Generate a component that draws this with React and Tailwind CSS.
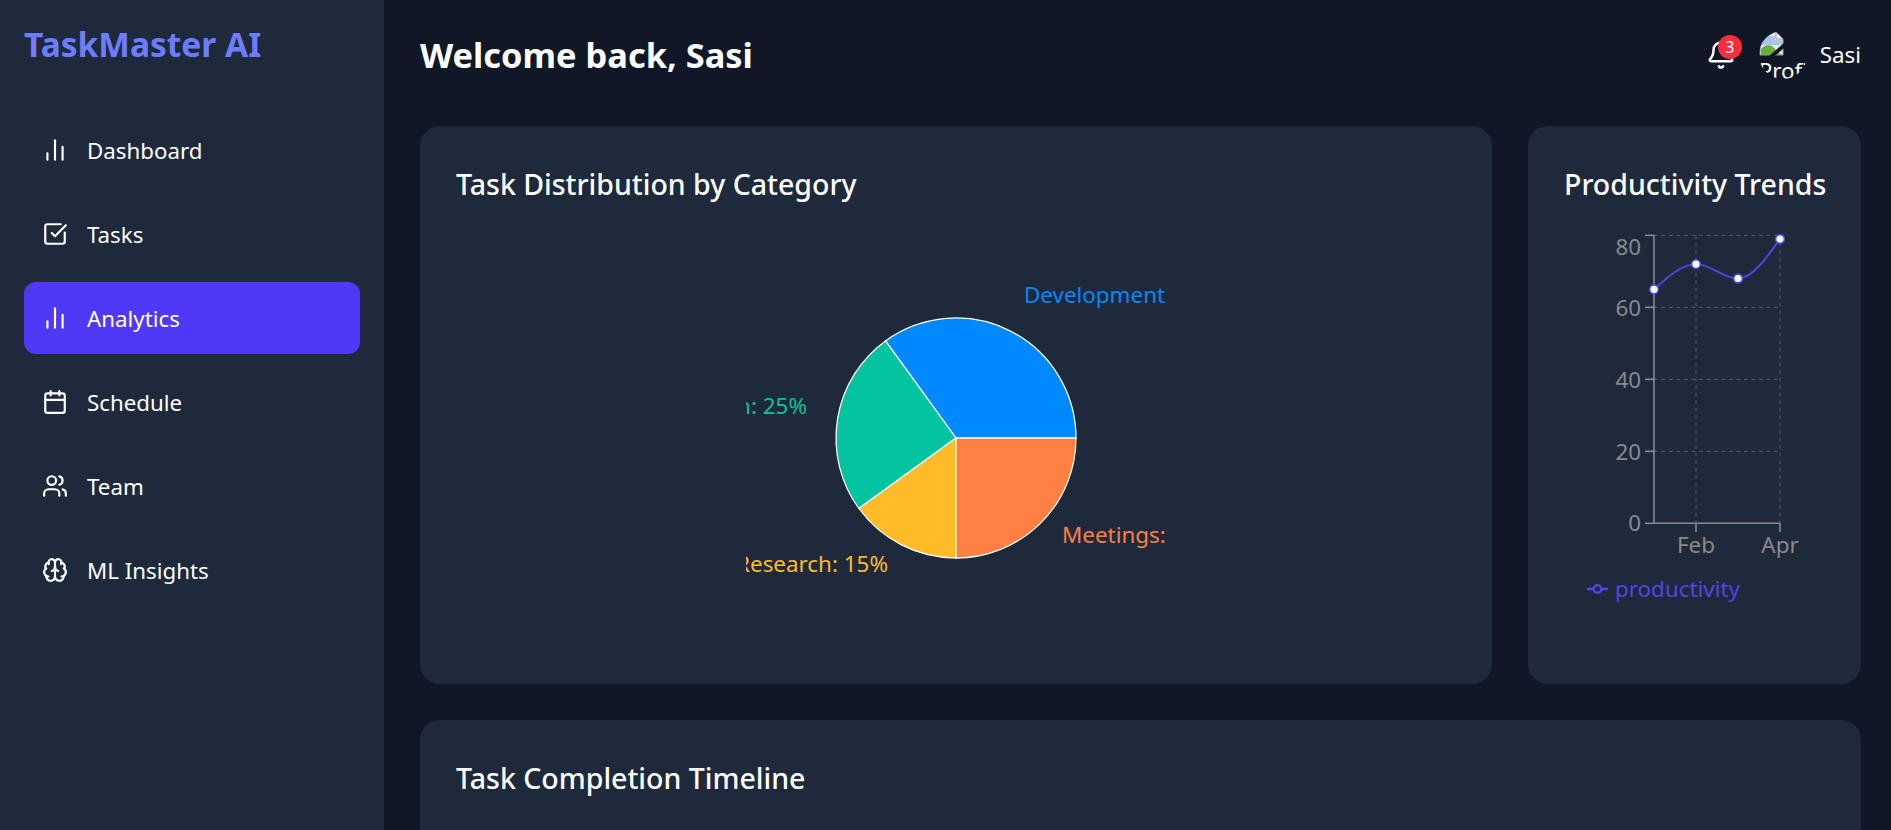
import React from 'react';
import { BarChart2, CheckSquare, Calendar, Users, Brain, Bell } from 'lucide-react';

const navItems = [
  { label: 'Dashboard', icon: BarChart2 },
  { label: 'Tasks', icon: CheckSquare },
  { label: 'Analytics', icon: BarChart2, active: true },
  { label: 'Schedule', icon: Calendar },
  { label: 'Team', icon: Users },
  { label: 'ML Insights', icon: Brain },
];

const slices = [
  { d: 'M210 188 L330 188 A120 120 0 0 0 139.5 90.9 Z', fill: '#0088FE' },
  { d: 'M210 188 L139.5 90.9 A120 120 0 0 0 112.9 258.5 Z', fill: '#00C49F' },
  { d: 'M210 188 L112.9 258.5 A120 120 0 0 0 210 308 Z', fill: '#FFBB28' },
  { d: 'M210 188 L210 308 A120 120 0 0 0 330 188 Z', fill: '#FF8042' },
];

function Card({ title, className, children }) {
  return (
    <div className={`bg-[#1e293b] rounded-[20px] p-9 ${className}`}>
      <h3 className="text-[28.5px] leading-[44px] font-medium text-white whitespace-nowrap">{title}</h3>
      {children}
    </div>
  );
}

function PieChart() {
  return (
    <svg width="420" height="375" className="block mx-auto mt-[44px] text-[22.4px]">
      {slices.map((s) => (
        <path key={s.fill} d={s.d} fill={s.fill} stroke="#fff" strokeWidth="1.25" />
      ))}
      <text x="278" y="53" fill="#0088FE">Development: 35%</text>
      <text x="61" y="164" fill="#00C49F" textAnchor="end">Design: 25%</text>
      <text x="142" y="322" fill="#FFBB28" textAnchor="end">Research: 15%</text>
      <text x="316" y="293" fill="#FF8042">Meetings: 25%</text>
    </svg>
  );
}

function TrendChart() {
  const gridY = [235.3, 307.3, 379.3, 451.3];
  const ticksY = [
    { v: 80, tick: 235.3, y: 255 },
    { v: 60, tick: 307.3, y: 316 },
    { v: 40, tick: 379.3, y: 388 },
    { v: 20, tick: 451.3, y: 460 },
    { v: 0, tick: 523.3, y: 531 },
  ];
  const points = [
    [1654, 289.3],
    [1696, 264.1],
    [1738, 278.5],
    [1780, 239],
  ];
  return (
    <svg width="261" height="340" viewBox="1564 224 261 340" className="block mt-[18px] text-[22.4px]">
      {gridY.map((y) => (
        <line key={y} x1="1654" x2="1780" y1={y} y2={y} stroke="#4a4f57" strokeWidth="1.25" strokeDasharray="3.75 3.75" />
      ))}
      {[1696, 1780].map((x) => (
        <line key={x} x1={x} x2={x} y1="235.3" y2="523.3" stroke="#4a4f57" strokeWidth="1.25" strokeDasharray="3.75 3.75" />
      ))}
      <line x1="1654" x2="1654" y1="235" y2="523.3" stroke="#8a8a8a" strokeWidth="1.6" />
      <line x1="1654" x2="1780" y1="523.3" y2="523.3" stroke="#8a8a8a" strokeWidth="1.6" />
      {ticksY.map((t) => (
        <g key={t.v}>
          <line x1="1645" x2="1654" y1={t.tick} y2={t.tick} stroke="#8a8a8a" strokeWidth="1.6" />
          <text x="1641" y={t.y} fill="#8a8a8a" textAnchor="end">{t.v}</text>
        </g>
      ))}
      <line x1="1696" x2="1696" y1="523.3" y2="532" stroke="#8a8a8a" strokeWidth="1.6" />
      <line x1="1780" x2="1780" y1="523.3" y2="532" stroke="#8a8a8a" strokeWidth="1.6" />
      <text x="1696" y="553" fill="#8a8a8a" textAnchor="middle">Feb</text>
      <text x="1780" y="553" fill="#8a8a8a" textAnchor="middle">Apr</text>
      <path
        d="M1654 289.3 C1668 276.7 1682 264.1 1696 264.1 C1710 264.1 1724 278.5 1738 278.5 C1752 278.5 1766 258.7 1780 239"
        fill="none"
        stroke="#4f46e5"
        strokeWidth="1.9"
      />
      {points.map(([x, y]) => (
        <circle key={x} cx={x} cy={y} r="4.4" fill="#fff" stroke="#4f46e5" strokeWidth="1.6" />
      ))}
    </svg>
  );
}

// the reference shows a browser's broken image placeholder
function BrokenImage() {
  return (
    <svg width="25" height="25" viewBox="0 0 25 25" className="block">
      <path d="M1 1 H17 L24 8 V24 H1 Z" fill="#dfe6ee" stroke="#9a9a9a" strokeWidth="1" />
      <path d="M17 1 V8 H24 Z" fill="#f4f4f4" stroke="#9a9a9a" strokeWidth="1" />
      <path d="M2 5 H16 V9 H23 V14 H2 Z" fill="#a9c6e8" />
      <path d="M2 24 V18 Q10 10 17 19 L22 24 Z" fill="#6cae3e" />
      <path d="M10 25 L25 12 V17 L16 25 Z" fill="#11151c" />
    </svg>
  );
}

export default function App() {
  return (
    <div className="flex h-screen overflow-hidden bg-[#101828] text-white font-['Noto_Sans',sans-serif]">
      <aside className="w-[384px] shrink-0 bg-[#1e293b] p-6">
        <h1 className="text-[33.5px] leading-[40px] font-bold text-[#6e7dff] whitespace-nowrap">TaskMaster AI</h1>
        <nav className="flex flex-col gap-3 mt-[50px]">
          {navItems.map(({ label, icon: Icon, active }) => (
            <div
              key={label}
              className={`h-[72px] flex items-center gap-[19px] pl-[18px] rounded-xl text-[22.3px] ${active ? 'bg-[#4f39f6]' : ''}`}
            >
              <Icon size={26} strokeWidth={2} />
              <span className="pt-[2px]">{label}</span>
            </div>
          ))}
        </nav>
      </aside>

      <main className="flex-1 min-w-0 pl-9 pr-[30px] pt-[28px]">
        <header className="h-[54px] mb-[44px] flex items-center justify-between">
          <h2 className="text-[34.4px] font-bold whitespace-nowrap">Welcome back, Sasi</h2>
          <div className="flex items-center">
            <div className="relative mr-[23px]">
              <Bell size={30} strokeWidth={2} />
              <span className="absolute -top-[5px] -right-[6px] w-6 h-6 rounded-full bg-[#ff2d3d] flex items-center justify-center text-[16px]">3</span>
            </div>
            <div className="w-12 h-12 rounded-full overflow-hidden text-[22.3px] leading-[30px] mr-[13px]">
              <BrokenImage />
              <div>Profile</div>
            </div>
            <span className="text-[22.3px]">Sasi</span>
          </div>
        </header>

        <div className="grid grid-cols-[1072px_333px] gap-9">
          <Card title="Task Distribution by Category" className="h-[558px]">
            <PieChart />
          </Card>
          <Card title="Productivity Trends" className="h-[558px]">
            <TrendChart />
            <div className="flex items-center gap-[7px] ml-[23px] mt-[10px] text-[22.4px] leading-[30px] text-[#4f46e5]">
              <svg width="21" height="12" viewBox="0 0 21 12" fill="none" stroke="#4f46e5" strokeWidth="2.6">
                <line x1="0" x2="6" y1="6" y2="6" />
                <line x1="15" x2="21" y1="6" y2="6" />
                <circle cx="10.5" cy="6" r="3.8" />
              </svg>
              <span>productivity</span>
            </div>
          </Card>
          <Card title="Task Completion Timeline" className="col-span-2 h-[400px]" />
        </div>
      </main>
    </div>
  );
}
